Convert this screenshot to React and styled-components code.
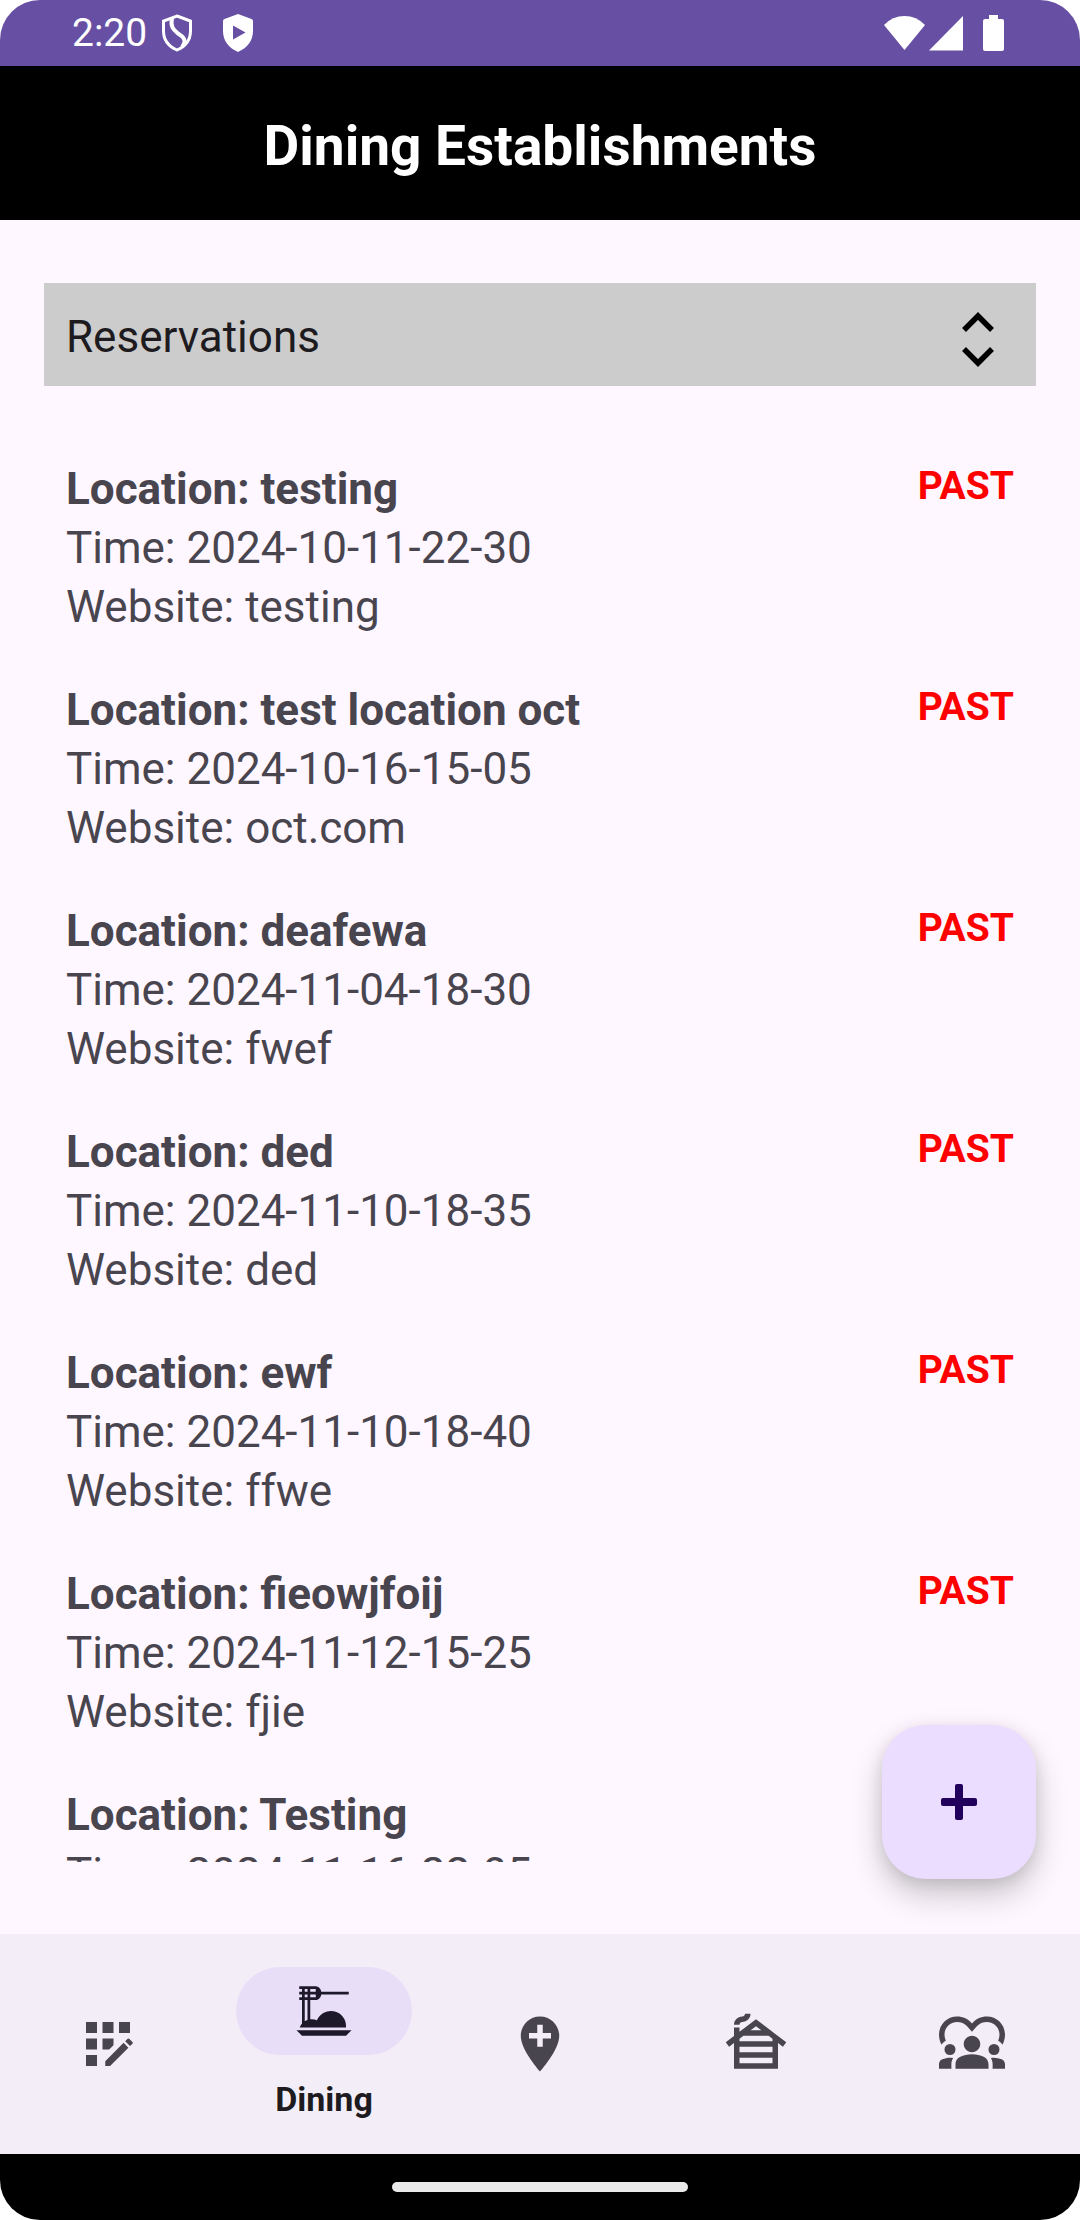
import React, { useState } from "react";
import styled, { createGlobalStyle } from "styled-components";
import {
  MdAddLocation,
  MdAppRegistration,
  MdCabin,
  MdDinnerDining,
  MdDiversity1,
} from "react-icons/md";

const GlobalStyle = createGlobalStyle`
  *, *::before, *::after { box-sizing: border-box; }
  body {
    margin: 0;
    background: #ffffff;
    font-family: Roboto, "Noto Sans", sans-serif;
  }
  h1, p, ul { margin: 0; padding: 0; }
  button, select { font: inherit; color: inherit; border: 0; margin: 0; padding: 0; background: none; }
`;

const Screen = styled.div`
  display: flex;
  flex-direction: column;
  height: 100vh;
  overflow: hidden;
  border-radius: 40px;
  background: #fef7ff;
  color: #49454f;
`;

const StatusBar = styled.div`
  display: flex;
  align-items: center;
  justify-content: space-between;
  flex: none;
  height: 66px;
  padding: 0 76px 0 72px;
  background: #6750a4;
  color: #ffffff;
`;

const StatusGroup = styled.div`
  display: flex;
  align-items: center;
  gap: ${(p) => p.$gap}px;
`;

const SignalIcons = styled.div`
  display: flex;
  gap: 4px;
`;

const Clock = styled.span`
  font-size: 39px;
  line-height: 44px;
`;

const Header = styled.header`
  display: flex;
  align-items: center;
  justify-content: center;
  flex: none;
  height: 154px;
  padding-top: 6px;
  background: #000000;
  color: #ffffff;
`;

const Title = styled.h1`
  font-size: 55px;
  line-height: 66px;
  font-weight: 700;
`;

const Main = styled.main`
  position: relative;
  display: flex;
  flex-direction: column;
  flex: 1;
  gap: 52px;
  min-height: 0;
  padding: 63px 44px 72px;
`;

const Picker = styled.div`
  display: grid;
  flex: none;
  padding: 25px 0 19px;
  background: #cccccc;
  color: #1d1b20;
  > * { grid-area: 1 / 1; }
`;

const PickerSelect = styled.select`
  appearance: none;
  width: 100%;
  height: 59px;
  padding: 0 22px;
  font-size: 44px;
  line-height: 59px;
`;

const PickerArrows = styled.svg`
  align-self: end;
  justify-self: end;
  margin-right: 42px;
  pointer-events: none;
`;

const List = styled.ul`
  flex: 1;
  min-height: 0;
  overflow-y: auto;
  scrollbar-width: none;
  list-style: none;
`;

const Item = styled.li`
  display: flex;
  justify-content: space-between;
  align-items: flex-start;
  padding: 22px;
`;

const Line = styled.p`
  font-size: 44px;
  line-height: 59px;
  font-weight: ${(p) => (p.$strong ? 700 : 400)};
`;

const Status = styled.span`
  font-size: 39px;
  line-height: 52px;
  font-weight: 700;
  color: #ff0000;
`;

const AddButton = styled.button`
  position: absolute;
  right: 44px;
  bottom: 55px;
  display: grid;
  place-items: center;
  width: 154px;
  height: 154px;
  border-radius: 44px;
  background: #eaddff;
  color: #21005d;
  box-shadow: 0 16px 32px rgba(0, 0, 0, 0.2), 0 4px 16px rgba(0, 0, 0, 0.1);
`;

const Nav = styled.nav`
  display: flex;
  flex: none;
  height: 220px;
  background: #f3edf7;
`;

const NavButton = styled.button`
  display: flex;
  flex: 1;
  flex-direction: column;
  align-items: center;
  justify-content: center;
  gap: 22px;
  color: #49454f;
`;

const NavIcon = styled.span`
  display: grid;
  place-items: center;
  width: 176px;
  height: 88px;
  border-radius: 44px;
  background: ${(p) => (p.$active ? "#e8def8" : "transparent")};
  color: ${(p) => (p.$active ? "#1d192b" : "#49454f")};
`;

const NavLabel = styled.span`
  font-size: 34px;
  line-height: 44px;
  font-weight: 700;
  color: #1d1b20;
`;

const GestureBar = styled.div`
  display: grid;
  place-items: center;
  flex: none;
  height: 66px;
  background: #000000;
`;

const GestureHandle = styled.div`
  width: 296px;
  height: 10px;
  border-radius: 5px;
  background: #eaeaea;
`;

const reservations = [
  { location: "testing", time: "2024-10-11-22-30", website: "testing", past: true },
  { location: "test location oct", time: "2024-10-16-15-05", website: "oct.com", past: true },
  { location: "deafewa", time: "2024-11-04-18-30", website: "fwef", past: true },
  { location: "ded", time: "2024-11-10-18-35", website: "ded", past: true },
  { location: "ewf", time: "2024-11-10-18-40", website: "ffwe", past: true },
  { location: "fieowjfoij", time: "2024-11-12-15-25", website: "fjie", past: true },
  { location: "Testing", time: "2024-11-16-22-05", website: "testing", past: false },
];

const tabs = [
  { name: "Planner", Icon: MdAppRegistration },
  { name: "Dining", Icon: MdDinnerDining },
  { name: "Destinations", Icon: MdAddLocation },
  { name: "Lodging", Icon: MdCabin },
  { name: "Community", Icon: MdDiversity1 },
];

function ShieldOutline() {
  return (
    <svg width="32" height="38" viewBox="0 0 32 38" fill="none" stroke="#fff" strokeWidth="3">
      <path d="M16 2 L29.500 7 V17 C29.500 26 24 32.500 16 36 C8 32.500 2.500 26 2.500 17 V7 Z" />
      <path strokeWidth="4" d="M11 4.500 C9 13 13 16 17 19.500 C23 23 26 27 21 33" />
    </svg>
  );
}

function ShieldPlay() {
  return (
    <svg width="32" height="38" viewBox="0 0 32 38" fill="#fff">
      <path
        fillRule="evenodd"
        d="M16 0 L29.500 5 Q31 5.600 31 7 V17 C31 27 25 34 16 38 C7 34 1 27 1 17 V7 Q1 5.600 2.500 5 Z M11 11.500 V25.500 L23.500 18.500 Z"
      />
    </svg>
  );
}

function Wifi() {
  return (
    <svg width="41" height="36" viewBox="0 0 41 36" fill="#fff">
      <path d="M0 10 Q8.500 1 20.500 1 T41 10 L20.500 35 Z" />
    </svg>
  );
}

function Signal() {
  return (
    <svg width="34" height="36" viewBox="0 0 34 36" fill="#fff">
      <path d="M34 1 V35.500 H0 Z" />
    </svg>
  );
}

function Battery() {
  return (
    <svg width="21" height="36" viewBox="0 0 21 36" fill="#fff">
      <path d="M6 0 H15 V4 H19 Q21 4 21 6 V34 Q21 36 19 36 H2 Q0 36 0 34 V6 Q0 4 2 4 H6 Z" />
    </svg>
  );
}

export default function App() {
  const [active, setActive] = useState("Dining");

  return (
    <>
      <GlobalStyle />
      <Screen>
        <StatusBar>
          <StatusGroup $gap={14}>
            <Clock>2:20</Clock>
            <StatusGroup $gap={29}>
              <ShieldOutline />
              <ShieldPlay />
            </StatusGroup>
          </StatusGroup>
          <StatusGroup $gap={20}>
            <SignalIcons>
              <Wifi />
              <Signal />
            </SignalIcons>
            <Battery />
          </StatusGroup>
        </StatusBar>

        <Header>
          <Title>Dining Establishments</Title>
        </Header>

        <Main>
          <Picker>
            <PickerSelect aria-label="Category">
              <option>Reservations</option>
            </PickerSelect>
            <PickerArrows
              width="32"
              height="55"
              viewBox="0 0 32 55"
              fill="none"
              stroke="#000"
              strokeWidth="5.500"
              aria-hidden="true"
            >
              <path d="M2 18 L16 4 L30 18 M2 37 L16 51 L30 37" />
            </PickerArrows>
          </Picker>

          <List>
            {reservations.map((r) => (
              <Item key={r.time}>
                <div>
                  <Line $strong>Location: {r.location}</Line>
                  <Line>Time: {r.time}</Line>
                  <Line>Website: {r.website}</Line>
                </div>
                {r.past && <Status>PAST</Status>}
              </Item>
            ))}
          </List>

          <AddButton type="button" aria-label="Add reservation">
            <svg width="36" height="36" viewBox="0 0 36 36" fill="currentColor">
              <rect x="14" y="0" width="8" height="36" rx="2" />
              <rect x="0" y="14" width="36" height="8" rx="2" />
            </svg>
          </AddButton>
        </Main>

        <Nav>
          {tabs.map(({ name, Icon }) => (
            <NavButton
              key={name}
              type="button"
              aria-label={name}
              aria-current={name === active ? "page" : undefined}
              onClick={() => setActive(name)}
            >
              <NavIcon $active={name === active}>
                <Icon size={66} />
              </NavIcon>
              {name === active && <NavLabel>{name}</NavLabel>}
            </NavButton>
          ))}
        </Nav>

        <GestureBar>
          <GestureHandle />
        </GestureBar>
      </Screen>
    </>
  );
}
